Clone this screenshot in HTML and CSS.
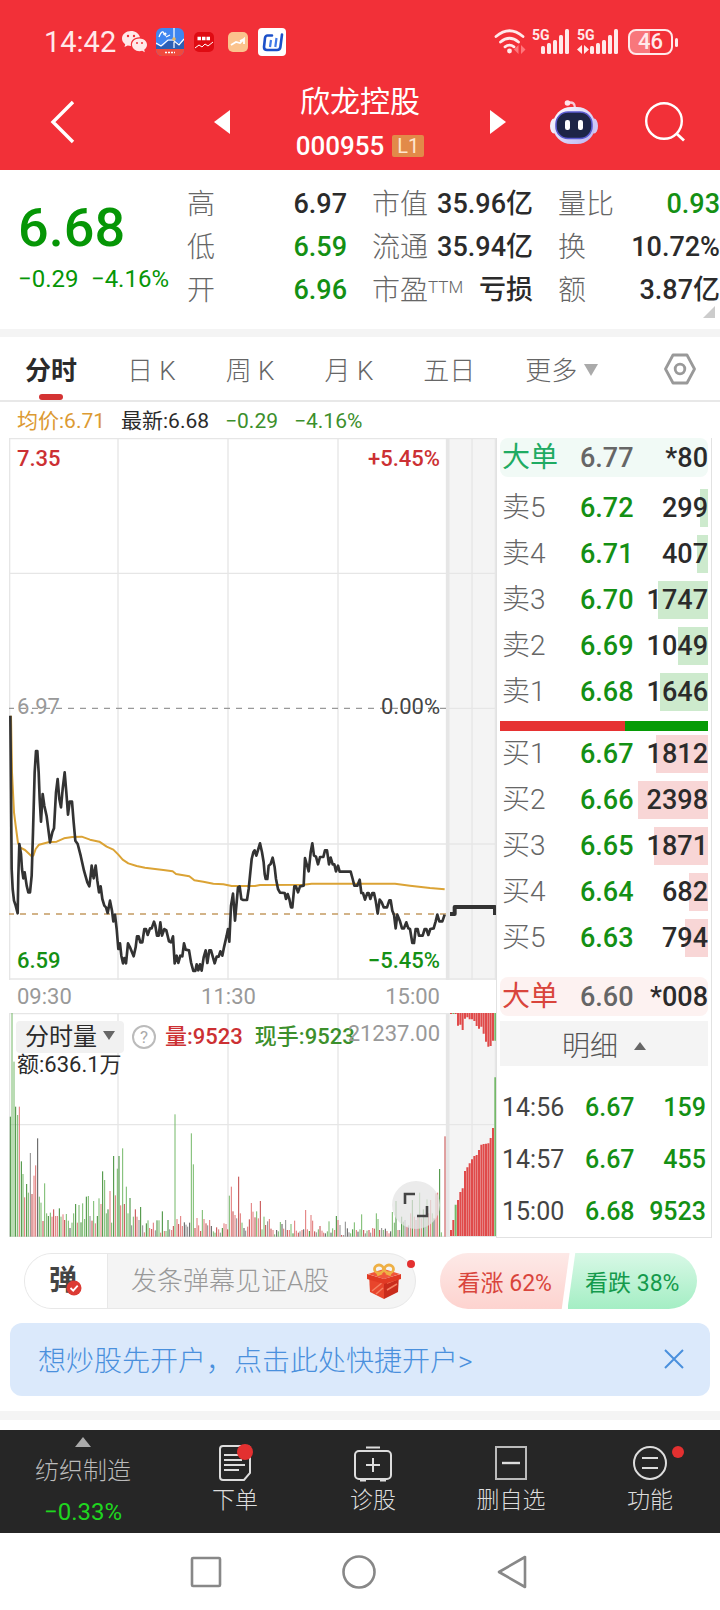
FILE: index.html
```html
<!DOCTYPE html>
<html lang="zh-CN">
<head>
<meta charset="utf-8">
<meta name="viewport" content="width=device-width, initial-scale=1">
<title>欣龙控股 000955</title>
<link rel="stylesheet" href="styles.css">
</head>
<body>
<header class="top">
  <div class="status">
    <span class="clock">14:42</span>
    <svg class="st-wechat" viewBox="0 0 26 24" width="26" height="24"><path fill="#ffe9ea" d="M9 1C4 1 0 4.300 0 8.500c0 2.300 1.200 4.300 3.200 5.700L2.500 17l3.200-1.600c1 .3 2.200.5 3.300.5C8 11 12 7 18 7.300 17 3.500 13.500 1 9 1z"/><path fill="#ffe9ea" d="M17.500 8.500c-4.400 0-7.500 2.800-7.500 6.300s3.300 6.400 7.500 6.400c1 0 1.900-.1 2.700-.4l2.600 1.400-.6-2.400c1.700-1.200 2.800-3 2.800-5 0-3.500-3.200-6.300-7.500-6.300z"/><g fill="#f23038"><circle cx="6" cy="6" r="1.200"/><circle cx="12" cy="6" r="1.200"/><circle cx="15" cy="13" r="1"/><circle cx="20" cy="13" r="1"/></g></svg>
    <svg class="st-blue" viewBox="0 0 28 28" width="28" height="28"><defs><clipPath id="r1"><rect width="28" height="28" rx="6"/></clipPath></defs><g clip-path="url(#r1)"><path fill="#3f86f0" d="M0 0h28v28H0z"/><path fill="#2c5fb4" d="M0 17l7 1 5-5 6 0 6 3 4-4v10H0z"/><path fill="#f04a3c" d="M0 21h28v7H0z"/><path fill="none" stroke="#fff" stroke-width="1.200" d="M0 15l5 3 7-6 5 0 6 5 5-6M18 0v20M3 9c2-6 5-7 5-2 1-3 3-2 1 1M10 9l4-2"/><circle cx="18" cy="11" r="1.800" fill="#e8b860"/><path stroke="#fff" stroke-width="1.500" stroke-dasharray="2 1" d="M9 24.500h10"/></g></svg>
    <svg class="st-red" viewBox="0 0 20 20" width="20" height="20"><rect width="20" height="20" rx="5" fill="#df0b12"/><path fill="none" stroke="#fff" stroke-width="1" d="M1 16l4-3 3 2 3-3 3 2 5-4"/><path stroke="#fff" stroke-width="3.500" stroke-dasharray="3.500 1" d="M3.500 6.500h13"/></svg>
    <svg class="st-peach" viewBox="0 0 20 20" width="20" height="20"><rect width="20" height="20" rx="5" fill="#fbc38d"/><path fill="none" stroke="#fff" stroke-width="1.800" d="M3 13l5-3 4 1 4-4v5M12 9l4-2"/></svg>
    <svg class="st-white" viewBox="0 0 28 28" width="28" height="28"><rect width="28" height="28" rx="4" fill="#fff"/><path fill="none" stroke="#1c50c8" stroke-width="2.600" stroke-linecap="round" stroke-linejoin="round" d="M14 7.500H9.500Q7.500 7.500 7 10L6 19Q6 22 9 22h10q3 0 3.400-3L24 6.500"/><path fill="none" stroke="#3f78e8" stroke-width="2.200" d="M13 12l-1 7M18.500 10l-1.200 9"/></svg>
    <span class="grow"></span>
    <svg class="st-wifi" viewBox="0 0 32 28" width="32" height="28"><g fill="none" stroke="#ffe9ea" stroke-width="2.800" stroke-linecap="round"><path d="M2 8.500Q15.500-3 29 8.500"/><path d="M6.500 14Q15.500 6.500 24.500 14"/><path d="M11 18.800q4.500-3.400 9 0"/></g><circle cx="15.500" cy="23" r="2.400" fill="#ffe9ea"/><path fill="#ff777c" d="M24.500 17v9l-4.500-4.500zM27 17v9l4.500-4.500z"/></svg>
    <svg class="st-sig" viewBox="0 0 38 28" width="38" height="28"><text x="0" y="12" class="g5">5G</text><g fill="#ffe9ea"><rect x="9" y="18" width="4" height="8" rx="1.500"/><rect x="15" y="15" width="4" height="11" rx="1.500"/><rect x="21" y="12" width="4" height="14" rx="1.500"/><rect x="27" y="7" width="4" height="19" rx="1.500"/><rect x="33" y="1" width="4" height="25" rx="1.500"/></g></svg>
    <svg class="st-sig2" viewBox="0 0 42 28" width="42" height="28"><text x="0" y="12" class="g5">5G</text><g fill="#ffe9ea"><path d="M5 17v9l-5-4.500zM7 17v9l5-4.500z"/><rect x="13" y="18" width="4" height="8" rx="1.500"/><rect x="19" y="15" width="4" height="11" rx="1.500"/><rect x="25" y="12" width="4" height="14" rx="1.500"/><rect x="31" y="7" width="4" height="19" rx="1.500"/><rect x="37" y="1" width="4" height="25" rx="1.500"/></g></svg>
    <span class="battery">46</span>
  </div>
  <div class="titlebar">
    <div class="tb-left"><button class="ib" aria-label="返回"><svg viewBox="0 0 26 44" width="26" height="44"><path d="M23 2L3 22l20 20" fill="none" stroke="#fff" stroke-width="3.400"/></svg></button></div>
    <div class="tb-mid">
      <button class="ib" aria-label="上一只"><svg viewBox="0 0 16 24" width="16" height="24"><path fill="#fff" d="M16 0v24L0 12z"/></svg></button>
      <div class="name"><h1>欣龙控股</h1><p>000955<span class="l1">L1</span></p></div>
      <button class="ib" aria-label="下一只"><svg viewBox="0 0 16 24" width="16" height="24"><path fill="#fff" d="M0 0v24l16-12z"/></svg></button>
    </div>
    <div class="tb-right">
      <button class="ib" aria-label="助手"><svg viewBox="0 0 48 46" width="48" height="46"><defs><linearGradient id="rb" x1="0" y1="0" x2="1" y2="1"><stop offset="0" stop-color="#fff"/><stop offset="1" stop-color="#b9b2f2"/></linearGradient></defs><path d="M18 4q7-2 7 5" fill="none" stroke="#f7c9d8" stroke-width="2.400"/><circle cx="17.500" cy="4" r="2.800" fill="#ffe3ea"/><ellipse cx="4" cy="27" rx="4" ry="7.500" fill="#f1eefc"/><ellipse cx="44" cy="27" rx="4" ry="7.500" fill="#cfc8f6"/><rect x="3" y="8" width="42" height="37" rx="18" fill="url(#rb)"/><rect x="6" y="13" width="36" height="26.500" rx="12" fill="#1d2547" stroke="#5a5bd0" stroke-width="1.600"/><rect x="15" y="21" width="5" height="10" rx="2.200" fill="#fff"/><rect x="28" y="21" width="5" height="10" rx="2.200" fill="#fff"/></svg></button>
      <button class="ib" aria-label="搜索"><svg viewBox="0 0 40 40" width="40" height="40"><circle cx="19" cy="19" r="17.800" fill="none" stroke="#fff" stroke-width="2.400"/><path d="M32 32l7 6.500" stroke="#fff" stroke-width="2.800"/></svg></button>
    </div>
  </div>
</header>

<main>
<section class="quote">
  <div class="last"><strong>6.68</strong><p><span>−0.29</span><span>−4.16%</span></p></div>
  <dl>
    <div><dt>高</dt><dd>6.97</dd></div>
    <div><dt>低</dt><dd class="dn">6.59</dd></div>
    <div><dt>开</dt><dd class="dn">6.96</dd></div>
  </dl>
  <dl>
    <div><dt>市值</dt><dd>35.96亿</dd></div>
    <div><dt>流通</dt><dd>35.94亿</dd></div>
    <div><dt>市盈<sup>TTM</sup></dt><dd>亏损</dd></div>
  </dl>
  <dl>
    <div><dt>量比</dt><dd class="dn">0.93</dd></div>
    <div><dt>换</dt><dd>10.72%</dd></div>
    <div><dt>额</dt><dd>3.87亿</dd></div>
  </dl>
  <i class="corner"></i>
</section>

<nav class="tabs">
  <button class="on">分时</button>
  <button>日 K</button>
  <button>周 K</button>
  <button>月 K</button>
  <button>五日</button>
  <button class="more">更多<i class="tri"></i></button>
  <button class="gear" aria-label="设置"><svg viewBox="0 0 32 32" width="32" height="32"><g fill="none" stroke="#999" stroke-width="2.800" stroke-linejoin="round"><path d="M9 2h14l7.500 14L23 30H9L1.500 16z"/><circle cx="16" cy="16" r="4.800"/></g></svg></button>
</nav>

<p class="legend"><span class="avg">均价:6.71</span><span>最新:6.68</span><span class="grn">−0.29</span><span class="grn">−4.16%</span></p>

<div class="board">
  <div class="charts">
    <div class="pane price">
      <svg viewBox="27 -753 1461 1626" preserveAspectRatio="none">
        <rect x="1338" y="-753" width="150" height="1626" fill="#f4f4f4"/>
        <g class="grid"><path d="M29-753V873M354-753V873M684-753V873M1014-753V873M1486-753V873M1416-753V873M27-751H1488M27-347H1488M1338 58H1488M27 465H1488M27 870H1488"/><path class="wide" d="M1343-753V873"/></g>
        <path d="M24 58H1338" stroke="#999" stroke-width="4" stroke-dasharray="18 18"/>
        <path d="M24 675H1338" stroke="#c49a62" stroke-width="5" stroke-dasharray="18 18"/>
        <polyline class="mean" points="33,80 36,250 42,370 47,410 54,462 60,475 75,483 95,502 100,500 107,480 117,467 145,460 170,458 192,448 217,444 245,443 270,452 298,458 320,473 340,482 355,497 368,512 385,523 410,531 435,536 465,540 490,543 518,547 528,555 568,562 583,574 610,578 640,584 670,586 695,591 765,591 780,588 910,587 935,584 1185,584 1230,590 1290,597 1334,601"/>
        <polyline class="line" points="31,80 33,300 35,540 38,600 42,635 47,650 53,673 55,560 58,465 63,495 66,540 70,568 74,550 80,590 85,610 90,610 95,560 99,430 104,250 108,186 112,186 116,250 119,330 123,398 128,315 133,350 140,382 150,460 157,430 162,418 168,310 173,270 178,330 183,355 188,300 194,250 199,310 204,377 209,338 216,338 221,400 226,455 233,465 242,500 252,545 262,580 268,592 272,560 275,530 281,568 287,530 292,575 297,610 302,592 307,630 313,650 318,655 323,672 330,635 336,665 340,697 345,677 350,720 355,780 360,763 364,800 369,823 373,807 378,823 384,763 390,775 401,802 407,775 411,742 416,742 421,760 427,760 433,720 438,720 443,738 450,718 455,718 462,698 466,710 471,740 476,740 481,700 486,740 493,720 499,724 507,757 513,760 519,742 524,823 530,800 535,822 541,800 547,802 552,763 557,782 567,784 573,820 580,846 586,846 590,826 595,844 600,826 605,845 611,805 617,784 622,822 628,784 633,784 644,823 650,803 656,803 661,787 667,800 672,775 680,740 684,720 688,758 693,650 699,614 705,695 710,640 714,595 719,592 724,630 730,633 741,633 746,600 750,560 755,510 760,490 764,484 769,500 775,480 780,463 786,490 791,520 794,555 797,570 802,570 806,530 812,525 818,506 824,535 828,570 834,600 840,611 854,612 858,630 863,615 868,630 873,655 877,655 883,592 888,592 894,610 900,592 911,590 915,507 920,525 926,547 932,490 937,463 942,500 948,503 954,526 960,504 970,504 975,484 981,484 987,526 992,506 998,526 1003,526 1008,547 1014,530 1019,548 1052,548 1058,570 1063,590 1072,590 1079,572 1084,612 1089,612 1095,632 1102,612 1106,612 1111,630 1117,612 1122,612 1127,635 1133,674 1139,632 1145,640 1151,655 1161,655 1168,634 1172,634 1177,665 1182,677 1187,718 1192,677 1200,697 1206,718 1212,718 1219,700 1225,718 1230,720 1237,762 1242,762 1247,720 1253,720 1257,740 1268,740 1274,720 1279,720 1285,738 1291,720 1301,718 1307,697 1312,677 1318,697 1327,697 1334,677"/>
        <polyline class="after" points="1350,675 1364,675 1364,654 1485,654 1485,678"/>
      </svg>
      <div class="labels"><span class="up">7.35</span><span class="up">+5.45%</span></div>
      <div class="labels mid"><span>6.97</span><span class="dark">0.00%</span></div>
      <div class="labels low"><span class="dn">6.59</span><span class="dn">−5.45%</span></div>
    </div>
    <div class="times"><span>09:30</span><span>11:30</span><span>15:00</span></div>
    <div class="pane volume">
      <svg viewBox="27 39 1461 672" preserveAspectRatio="none">
        <rect x="1338" y="39" width="150" height="672" fill="#f4f4f4"/>
        <g class="grid"><path d="M29 39V711M354 39V711M684 39V711M1014 39V711M1486 39V711M1416 39V711M27 41H1488M27 374H1488M27 709H1488"/><path class="wide" d="M1343 39V711"/></g>
        <g id="bars"></g>
      </svg>
      <div class="vinfo">
        <button class="chip">分时量<i class="tri"></i></button>
        <button class="help" aria-label="说明">?</button>
        <span class="up">量:9523</span><span class="grn">现手:9523</span>
      </div>
      <p class="amount">额:636.1万</p>
      <span class="vmax">21237.00</span>
      <button class="expand" aria-label="全屏"><svg viewBox="0 0 26 26" width="26" height="26"><path d="M2 12V2h10M24 14v10H14" fill="none" stroke="#444" stroke-width="2.600"/></svg></button>
    </div>
  </div>

  <aside class="book">
    <table class="big sell"><tr><th>大单</th><td>6.77</td><td>*80</td></tr></table>
    <table class="levels ask">
      <tr><th>卖5</th><td>6.72</td><td><i style="width:8px"></i><b>299</b></td></tr>
      <tr><th>卖4</th><td>6.71</td><td><i style="width:11px"></i><b>407</b></td></tr>
      <tr><th>卖3</th><td>6.70</td><td><i style="width:50px"></i><b>1747</b></td></tr>
      <tr><th>卖2</th><td>6.69</td><td><i style="width:30px"></i><b>1049</b></td></tr>
      <tr><th>卖1</th><td>6.68</td><td><i style="width:48px"></i><b>1646</b></td></tr>
    </table>
    <div class="ratio"><i></i></div>
    <table class="levels bid">
      <tr><th>买1</th><td>6.67</td><td><i style="width:52px"></i><b>1812</b></td></tr>
      <tr><th>买2</th><td>6.66</td><td><i style="width:70px"></i><b>2398</b></td></tr>
      <tr><th>买3</th><td>6.65</td><td><i style="width:54px"></i><b>1871</b></td></tr>
      <tr><th>买4</th><td>6.64</td><td><i style="width:19px"></i><b>682</b></td></tr>
      <tr><th>买5</th><td>6.63</td><td><i style="width:23px"></i><b>794</b></td></tr>
    </table>
    <table class="big buy"><tr><th>大单</th><td>6.60</td><td>*008</td></tr></table>
    <button class="detail">明细<i class="tri-up"></i></button>
    <table class="ticks">
      <tr><th>14:56</th><td>6.67</td><td>159</td></tr>
      <tr><th>14:57</th><td>6.67</td><td>455</td></tr>
      <tr><th>15:00</th><td>6.68</td><td>9523</td></tr>
    </table>
  </aside>
</div>

<section class="social">
  <div class="danmu">
    <button class="dm-btn" aria-label="弹幕开关"><span>弹</span><svg viewBox="0 0 16 16" width="16" height="16"><circle cx="8" cy="8" r="7.500" fill="#dc3b34"/><path d="M4.500 8l2.700 2.700 4.500-5" fill="none" stroke="#fff" stroke-width="1.800"/></svg></button>
    <input type="text" aria-label="发弹幕" placeholder="发条弹幕见证A股">
    <svg class="gift" viewBox="0 0 34 36" width="34" height="36"><path fill="#f0563a" d="M1 11l16-5 16 5-16 5z"/><path fill="#e8452c" d="M2 12l15 4.500V36L3 29z"/><path fill="#c92c1c" d="M32 12l-15 4.500V36l14-7z"/><path stroke="#f58062" stroke-width="1.500" d="M5 28l11-9M9 31l7-6M20 20l10-4M20 27l10-6"/><path fill="#e13a24" d="M0 11l17 5 17-5v5l-17 5-17-5z"/><g fill="none" stroke="#eeb045" stroke-width="2.800"><ellipse cx="12" cy="6" rx="4.500" ry="4"/><ellipse cx="22" cy="6" rx="4.500" ry="4"/><path d="M15 10l-5 2M19 10l5 2"/></g></svg>
    <i class="dot"></i>
  </div>
  <div class="vote"><button class="bull">看涨 62%</button><button class="bear">看跌 38%</button></div>
</section>

<section class="banner">
  <a href="#">想炒股先开户，点击此处快捷开户&gt;</a>
  <button class="ib" aria-label="关闭"><svg viewBox="0 0 20 20" width="20" height="20"><path d="M1 1l18 18M19 1L1 19" stroke="#4a90dd" stroke-width="2"/></svg></button>
</section>
<div class="band"></div>
</main>

<nav class="actions">
  <button class="sector"><i class="tri-up"></i><span>纺织制造</span><em>−0.33%</em></button>
  <button><span class="icon"><svg viewBox="0 0 34 38" width="34" height="38"><g fill="none" stroke="#ddd" stroke-width="2"><path d="M5 2h24q3 0 3 3v24l-6 7H5q-3 0-3-3V5q0-3 3-3z"/><path d="M6 11h14M6 16h18M6 21h21M6 26h15"/></g></svg><i class="dot lg"></i></span>下单</button>
  <button><span class="icon"><svg viewBox="0 0 40 38" width="40" height="38"><g fill="none" stroke="#ddd" stroke-width="2"><rect x="2" y="7" width="36" height="28" rx="4"/><path d="M13 3.500h14M20 14v14M13 21h14"/><path stroke-width="3" d="M7 36h6M27 36h6"/></g></svg></span>诊股</button>
  <button><span class="icon"><svg viewBox="0 0 34 38" width="34" height="38"><path fill="none" stroke="#bbb" stroke-width="2" d="M2 3h30v32H2z"/><path stroke="#ddd" stroke-width="2.400" d="M8 19h18"/></svg></span>删自选</button>
  <button><span class="icon"><svg viewBox="0 0 36 38" width="36" height="38"><g fill="none" stroke="#ddd" stroke-width="2"><circle cx="18" cy="19" r="16"/><path d="M10 14h16M10 24h16"/></g></svg><i class="dot far"></i></span>功能</button>
</nav>

<nav class="system">
  <button class="ib" aria-label="最近任务"><svg viewBox="0 0 32 32" width="32" height="32"><rect x="2" y="2" width="28" height="28" rx="1" fill="none" stroke="#888" stroke-width="2.600"/></svg></button>
  <button class="ib" aria-label="主屏幕"><svg viewBox="0 0 34 34" width="34" height="34"><circle cx="17" cy="17" r="15.500" fill="none" stroke="#888" stroke-width="2.600"/></svg></button>
  <button class="ib" aria-label="返回键"><svg viewBox="0 0 32 34" width="32" height="34"><path d="M29 2v30L3 17z" fill="none" stroke="#888" stroke-width="2.600" stroke-linejoin="round"/></svg></button>
</nav>
<script src="chart.js"></script>
</body>
</html>
```

FILE: chart.js
```js
// Per-minute volume: g = down, r = up, k = flat, followed by the bar's top edge.
const minutes = `g350 g39 g185 g320 g345 r320 g484 g522 r592 g552 g578 k459 r582 r527 r496 k415 g590 g608 r663 g550
g640 g648 g638 r650 r628 r648 r648 g625 g650 r643 r660 g642 g662 k684 g668 g640 g612 r668 g615 g667
g610 g657 g590 g588 k648 r662 g603 r670 g648 g595 r612 g514 g540 g640 g628 r573 g668 g468 r586 g506
g468 r616 g445 r612 g560 g640 g594 k676 g650 r628 r650 k660 g621 k676 r697 g670 g661 r684 r687 r668
k691 g661 g661 r698 g634 r693 g693 g660 k688 r690 r678 g343 r657 r672 r648 r678 k667 k674 k680 k668
g400 g493 r684 r654 r676 r693 g630 r657 r670 k676 r660 k678 g694 g698 r682 r688 k698 g684 r670 r672
r688 g587 r560 r634 r645 k655 r530 r640 g668 k684 k692 r680 r658 r609 r635 r652 g634 r655 r603 g688
g650 r675 k664 r657 r686 r690 g703 k690 g694 g666 k672 r686 k660 r690 r690 g672 g700 r662 r692 r698
k694 r690 k688 r630 r688 g693 r645 r662 r694 k697 g688 r678 r692 r698 k700 g694 g664 k698 g685 r690
g648 r660 k675 r705 k705 k665 k685 k697 g700 g688 g667 r690 k695 g688 g643 r690 k700 g692 r690 k698
r684 r686 g640 g657 r690 k684 g690 k686 r693 r700 k694 g636 g668 g603 r690 k690 g650 g665 k660 r680
k676 r640 g600 r650 k660 r650 g578 r655 g628 k650 g598 r640 r600 g640 k655 r580 r578 g507 g697 k710
r409`.split(/\s+/);
const auction = 'r690 r660 g614 r600 r576 r565 r513 r502 r490 r478 r468 r465 r450 r434 r432 r431 r430 r414 r384 g232'.split(' ');
const hanging = 'r42 g42 r42 r77 r74 r90 r56 r52 r58 r58 r63 r78 r86 r80 r101 r125 r140 r138 r122 g122'.split(' ');

const paths = {};
function bar(name, x, from, to) {
  paths[name] = (paths[name] || '') + 'M' + Math.round(x) + ' ' + from + 'V' + to;
}
const step = (1335 - 31) / (minutes.length - 1);
minutes.forEach((m, i) => bar(m[0] + (i % 3 ? '' : ' deep'), 31 + step * i, 710, m.slice(1)));
auction.forEach((m, i) => bar(m[0] + ' solid', 1353 + 7 * i, 708, m.slice(1)));
hanging.forEach((m, i) => bar(m[0] + ' solid', 1353 + 7 * i, 39, m.slice(1)));

const group = document.getElementById('bars');
for (const name in paths) {
  const p = document.createElementNS('http://www.w3.org/2000/svg', 'path');
  p.setAttribute('class', 'bar ' + name);
  p.setAttribute('d', paths[name]);
  group.appendChild(p);
}
```

FILE: styles.css
```css
* { box-sizing: border-box; }
body, h1, p, dl, dd { margin: 0; }
body {
  background: #fff;
  color: #2b2b2b;
  font-family: Roboto, "Noto Sans CJK SC", sans-serif;
  font-size: 22px;
}
button {
  border: 0;
  padding: 0;
  background: none;
  color: inherit;
  font: inherit;
  white-space: nowrap;
}
svg { display: block; }
table { width: 100%; border-collapse: separate; border-spacing: 0; table-layout: fixed; }
th, td { padding: 0; font-weight: 500; text-align: right; white-space: nowrap; }
th { text-align: left; font-weight: 300; }
.ib { display: flex; }
.grow { flex: 1; }
.up { color: #cc3033; }
.dn { color: #149014; }
.grn { color: #3c8f2c; }

/* header */
.top { background: #f23038; color: #fff; }
.status {
  display: flex;
  align-items: center;
  height: 78px;
  padding: 6px 41px 0 44px;
}
.clock { width: 78px; color: #ffe9ea; font-size: 29px; }
.st-blue { margin-left: 8px; }
.st-red { margin-left: 10px; }
.st-peach { margin-left: 14px; }
.st-white { margin-left: 10px; }
.st-wifi { margin-right: 6px; }
.st-sig { margin-right: 7px; }
.st-sig2 { margin-right: 9px; }
.g5 { fill: #ffe9ea; font-size: 14px; font-weight: 700; }
.battery {
  position: relative;
  width: 45px;
  height: 26px;
  margin-right: 6px;
  border: 2px solid #ffe9ea;
  border-radius: 8px;
  background: linear-gradient(90deg, #f8777c 50%, transparent 50%);
  color: #ffe9ea;
  font-size: 22px;
  font-weight: 500;
  line-height: 22px;
  text-align: center;
}
.battery::after {
  content: "";
  position: absolute;
  right: -7px;
  top: 7px;
  width: 3px;
  height: 9px;
  border-radius: 2px;
  background: #ffe9ea;
}
.titlebar {
  display: grid;
  grid-template-columns: 214fr 292fr 214fr;
  align-items: center;
  padding-bottom: 4px;
}
.tb-left { padding-left: 50px; }
.tb-mid { display: flex; align-items: center; justify-content: space-between; }
.tb-right {
  display: flex;
  align-items: center;
  justify-content: space-between;
  padding: 0 35px 0 44px;
}
.name { text-align: center; }
.name h1 { font-size: 30px; font-weight: 400; line-height: 48px; }
.name p {
  display: flex;
  align-items: center;
  gap: 8px;
  font-size: 26px;
  font-weight: 500;
  line-height: 40px;
}
.l1 {
  width: 32px;
  border-radius: 2px;
  background: #e28a49;
  color: #ffe6cf;
  font-size: 20px;
  font-weight: 400;
  line-height: 22px;
}

/* quote summary */
.quote {
  position: relative;
  display: grid;
  grid-template-columns: 144fr 160fr 161fr 162fr;
  column-gap: 25px;
  padding: 13px 0 17px 18px;
  border-bottom: 8px solid #f4f4f4;
}
.last { margin-right: -7px; color: #069606; }
.last strong { display: block; padding-top: 12px; font-size: 54px; font-weight: 500; line-height: 66px; }
.last p { display: flex; justify-content: space-between; font-size: 24px; line-height: 36px; white-space: nowrap; }
.quote dl { min-width: 0; }
.quote dl > div { display: flex; justify-content: space-between; font-size: 28px; line-height: 43px; white-space: nowrap; }
.quote dt { color: #666; font-weight: 300; }
.quote dd { font-size: 27px; font-weight: 500; }
.quote sup { font-size: 17px; line-height: 1; vertical-align: 7px; }
.corner {
  position: absolute;
  right: 5px;
  bottom: 11px;
  width: 0;
  height: 0;
  border-left: 12px solid transparent;
  border-bottom: 12px solid #ccc;
}

/* period tabs */
.tabs {
  display: flex;
  align-items: center;
  gap: 50px;
  height: 65px;
  padding: 0 24px 0 25px;
  border-bottom: 2px solid #e8e8e8;
  color: #666;
  font-size: 26px;
  font-weight: 300;
}
.tabs button { height: 63px; }
.tabs .on { position: relative; color: #2b2b2b; font-weight: 700; }
.tabs .on::after {
  content: "";
  position: absolute;
  left: 14px;
  right: 14px;
  bottom: 0;
  height: 6px;
  border-radius: 3px;
  background: #d43333;
}
.tri {
  display: inline-block;
  margin-left: 7px;
  border: 7px solid transparent;
  border-top: 12px solid #aaa;
  border-bottom: 0;
  vertical-align: 4px;
}
.tabs .gear { display: flex; align-items: center; margin-left: auto; }
.legend { display: flex; gap: 16px; padding: 2px 17px 0; font-size: 21px; line-height: 34px; }
.legend .avg { color: #dc9a32; }

/* charts and order book */
.board { display: flex; padding: 0 8px 0 9px; }
.charts { flex: 1; min-width: 0; }
.pane { position: relative; }
.pane > svg { width: 100%; }
.price > svg { height: 542px; }
.volume > svg { height: 224px; }
.grid path { fill: none; stroke: #e6e6e6; stroke-width: 4; }
.grid .wide { stroke-width: 11; }
.mean, .line, .after { fill: none; stroke-linejoin: round; }
.mean { stroke: #dba335; stroke-width: 6; }
.line { stroke: #333; stroke-width: 8; }
.after { stroke: #333; stroke-width: 12; }
.bar { fill: none; stroke-width: 3; }
.bar.g { stroke: #74b868; }
.bar.r { stroke: #e07474; }
.bar.k { stroke: #8a8a8a; }
.bar.g.deep { stroke: #398a30; }
.bar.r.deep { stroke: #c24444; }
.bar.k.deep { stroke: #555; }
.bar.solid { stroke-width: 6; }
.bar.r.solid { stroke: #e04a4a; }
.labels {
  position: absolute;
  top: 4px;
  left: 8px;
  right: 56px;
  display: flex;
  justify-content: space-between;
  color: #999;
  line-height: 34px;
}
.labels, .vinfo .up, .vinfo .grn { font-weight: 500; }
.labels.mid { top: 252px; font-weight: 400; }
.labels.low { top: auto; bottom: 2px; }
.dark { color: #444; }
.times {
  display: flex;
  justify-content: space-between;
  padding: 1px 56px 0 8px;
  color: #999;
  line-height: 32px;
}
.vinfo {
  position: absolute;
  top: 8px;
  left: 7px;
  display: flex;
  align-items: center;
  line-height: 32px;
}
.chip { width: 108px; border-radius: 4px; background: #f1f1f1; font-size: 24px; }
.chip .tri { margin-left: 6px; border-width: 9px 6px 0; border-top-color: #666; vertical-align: 5px; }
.help {
  width: 24px;
  height: 24px;
  margin: 0 9px 0 8px;
  border: 2px solid #bbb;
  border-radius: 50%;
  color: #aaa;
  font-size: 17px;
  line-height: 20px;
}
.vinfo .grn { margin-left: 12px; }
.amount { position: absolute; top: 36px; left: 8px; line-height: 32px; }
.vmax { position: absolute; top: 5px; right: 56px; color: #999; line-height: 32px; }
.expand {
  position: absolute;
  right: 56px;
  bottom: 8px;
  display: flex;
  align-items: center;
  justify-content: center;
  width: 48px;
  height: 48px;
  border-radius: 50%;
  background: rgba(228, 228, 228, 0.75);
}
.book {
  width: 216px;
  padding: 0 3px;
  border: 1px solid #e2e2e2;
  border-top-width: 0;
  font-size: 28px;
}
.book th:first-child { width: 80px; padding-left: 2px; }
.book td:nth-child(2) { width: 53px; text-align: left; }
.book td { font-size: 27px; }
.book tr { height: 46px; }
.book .big tr { height: 39px; }
.big th { font-weight: 400; line-height: 30px; }
.big td:nth-child(2) { color: #666; }
.sell { background: #f1faf6; border-radius: 8px; color: #2b2b2b; }
.sell th { color: #1fab63; }
.buy { margin-top: 16px; background: #fdf2f1; border-radius: 8px; }
.buy th { color: #d9453c; }
.levels th { color: #666; line-height: 30px; }
.levels td:nth-child(2) { color: #149014; }
.levels td:last-child { position: relative; }
.levels i { position: absolute; top: 4px; right: 0; bottom: 4px; }
.levels b { position: relative; font-weight: 500; }
.ask { margin-top: 8px; }
.ask i { background: #cdeacd; }
.bid i { background: #f8d6d6; }
.ratio { height: 10px; margin-top: 6px; background: #069b06; }
.ratio i { display: block; width: 60%; height: 100%; background: #e63232; }
.detail {
  display: block;
  width: 100%;
  height: 45px;
  margin: 5px 0 15px;
  background: #f4f4f4;
  color: #555;
  font-weight: 300;
}
.tri-up {
  display: inline-block;
  border: 6px solid transparent;
  border-bottom: 8px solid #666;
  border-top: 0;
}
.detail .tri-up { margin-left: 16px; vertical-align: 6px; }
.book .ticks tr { height: 52px; }
.book .ticks th, .book .ticks td { font-size: 25px; }
.book .ticks th { width: 85px; color: #444; font-weight: 400; }
.ticks td { color: #149014; }
.ticks td:last-child { padding-right: 2px; }

/* comment and vote row */
.social { display: flex; gap: 24px; padding: 15px 23px 14px 24px; }
.danmu {
  position: relative;
  display: flex;
  flex: 1;
  align-items: center;
  min-width: 0;
  height: 56px;
  border: 1px solid #e8e8e8;
  border-radius: 28px;
  background: #f4f4f4;
}
.dm-btn {
  position: relative;
  width: 83px;
  height: 54px;
  border-right: 1px solid #e8e8e8;
  border-radius: 28px 0 0 28px;
  background: #fff;
  color: #444;
  font-size: 28px;
  font-weight: 700;
  line-height: 50px;
}
.dm-btn span { display: block; padding-right: 6px; }
.dm-btn svg { position: absolute; left: 41px; top: 26px; }
.danmu input {
  flex: 1;
  min-width: 0;
  border: 0;
  padding: 0 0 0 23px;
  background: none;
  font: inherit;
  font-size: 26px;
  font-weight: 300;
}
.danmu input::placeholder { color: #999; opacity: 1; }
.gift { flex: none; margin-right: 14px; }
.dot {
  position: absolute;
  top: 6px;
  right: 0;
  width: 8px;
  height: 8px;
  border-radius: 50%;
  background: #e33030;
}
.vote { display: flex; flex: none; width: 257px; height: 56px; font-size: 23px; }
.vote button { flex: 1; }
.bull {
  margin-right: -2px;
  border-radius: 28px 0 0 28px;
  background: linear-gradient(#fde9e7, #fdd3cf);
  color: #d9453c;
  clip-path: polygon(0 0, 100% 0, 94% 100%, 0 100%);
}
.bear {
  border-radius: 0 28px 28px 0;
  background: linear-gradient(#d8f8e6, #a4eec4);
  color: #149a4c;
  clip-path: polygon(6% 0, 100% 0, 100% 100%, 0 100%);
}
.banner {
  display: flex;
  align-items: center;
  justify-content: space-between;
  height: 73px;
  margin: 0 10px 15px;
  padding: 0 26px 2px 28px;
  border-radius: 12px;
  background: #dbe9fb;
  font-size: 28px;
  font-weight: 300;
}
.banner a { color: #4a90dd; text-decoration: none; }
.band { height: 9px; margin-bottom: 10px; background: #f4f4f4; }

/* bottom bars */
.actions {
  display: grid;
  grid-template-columns: 166fr 138fr 138fr 138fr 140fr;
  height: 103px;
  background: #262626;
  color: #ddd;
  font-size: 23px;
  font-weight: 300;
}
.actions button { display: flex; flex-direction: column; align-items: center; padding-top: 14px; line-height: 34px; }
.icon { position: relative; margin-bottom: 2px; }
.actions .sector { padding-top: 7px; color: #bbb; font-size: 24px; }
.actions .tri-up { border-width: 0 8px 10px; border-bottom-color: #aaa; margin-bottom: 7px; }
.sector em { margin-top: 7px; color: #1fd61f; font-style: normal; font-weight: 400; }
.dot.lg { top: 0; right: -1px; width: 16px; height: 16px; }
.dot.far { top: 2px; right: -16px; width: 12px; height: 12px; }
.system {
  display: flex;
  align-items: center;
  justify-content: space-between;
  height: 77px;
  padding: 0 192px 0 190px;
}
```
